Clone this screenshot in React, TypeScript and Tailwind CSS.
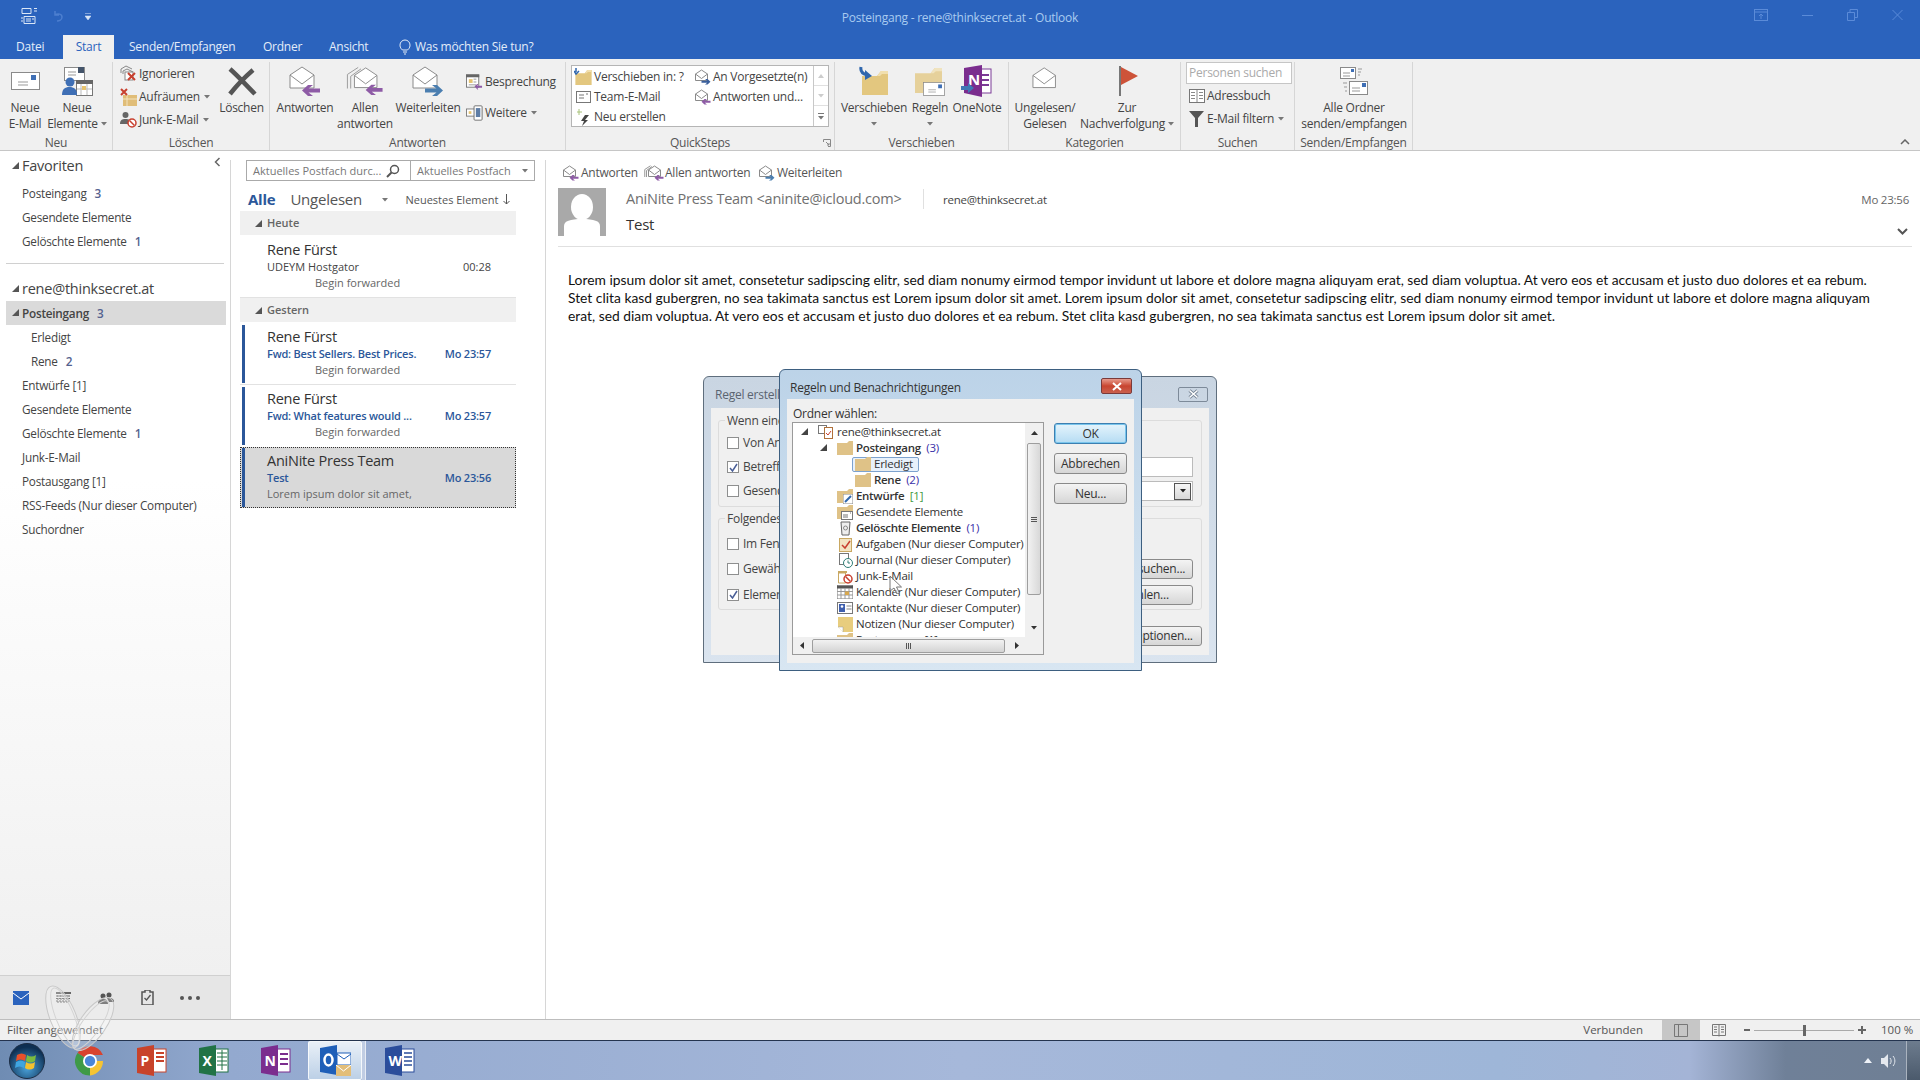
import React from "react";

const Caret = ({ c = "#777" }: { c?: string }) => (
  <svg width="6" height="4" viewBox="0 0 6 4" className="shrink-0"><path d="M0 0h6L3 3.5z" fill={c} /></svg>
);
const Tri = ({ c = "#555" }: { c?: string }) => (
  <svg width="7" height="7" viewBox="0 0 7 7" className="shrink-0"><path d="M7 0v7H0z" fill={c} /></svg>
);

const OpenEnv = ({ size = 32, arrow = "#8e5ba6", dir = "left", multi = false, none = false, sw = 1 }: { size?: number; arrow?: string; dir?: string; multi?: boolean; none?: boolean; sw?: number }) => (
  <svg width={multi ? size * 1.25 : size} height={size} viewBox={multi ? "-8 0 40 32" : "0 0 32 32"} className="shrink-0">
    {multi && <path d="M-6.5 24V9L5 1.5M-3 24V11L8 3" fill="none" stroke="#999" strokeWidth={sw} />}
    <path d="M1 10 13 2l12 8v13H1z" fill="#fff" stroke="#8a8a8a" strokeWidth={sw} />
    <path d="M1 10l12 9 12-9" fill="none" stroke="#8a8a8a" strokeWidth={sw} />
    {!none && (dir === "left"
      ? <polygon points="13,25.5 19,20 24,20 19.5,23.5 31,23.5 31,27.5 19.5,27.5 24,31 19,31" fill={arrow} />
      : <polygon points="31,25.5 25,20 20,20 24.5,23.5 13,23.5 13,27.5 24.5,27.5 20,31 25,31" fill={arrow} />)}
  </svg>
);

const Mail = ({ w = 29, h = 18 }: { w?: number; h?: number }) => (
  <svg width={w} height={h} viewBox="0 0 29 18" className="shrink-0">
    <rect x=".5" y=".5" width="28" height="17" fill="#fff" stroke="#8a8a8a" />
    <rect x="20" y="3" width="5" height="5" fill="#3f6fb5" />
    <path d="M7 10h10M7 13h10" stroke="#999" />
  </svg>
);

const Folder = ({ w = 26, h = 24, c = "#e3c77f" }: { w?: number; h?: number; c?: string }) => (
  <svg width={w} height={h} viewBox="0 0 26 24" className="shrink-0">
    <path d="M0 5h15l4-5h7v24H0z" fill={c} />
    <path d="M15 5l4-5h7v3h-6l-2 2z" fill="#f1dfae" />
  </svg>
);

const Group = ({ w, label, children, launcher }: { w: number; label: string; children?: React.ReactNode; launcher?: boolean }) => (
  <div style={{ width: w }} className="shrink-0 flex flex-col border-r border-[#d6d6d6] mt-[3px] relative">
    <div className="flex flex-1 min-h-0">{children}</div>
    <div className="h-[16px] leading-[18px] text-center text-[#555] whitespace-nowrap shrink-0">{label}</div>
    {launcher && (
      <svg width="8" height="8" viewBox="0 0 8 8" className="absolute right-[3px] bottom-[3px]"><path d="M.5 3V.5H7.5V7.5H5M3 3l3 3M6 4v2H4" fill="none" stroke="#888" /></svg>
    )}
  </div>
);

const Large = ({ w, ml = 0, icon, lines, caret, stack }: { w: number; ml?: number; icon: React.ReactNode; lines: string[]; caret?: boolean; stack?: boolean }) => (
  <div style={{ width: w, marginLeft: ml }} className="shrink-0 flex flex-col items-center">
    <div className="h-[38px] flex items-center justify-center shrink-0">{icon}</div>
    {lines.map((l, i) => (
      <div key={i} className="h-4 leading-4 whitespace-nowrap flex items-center gap-[3px] shrink-0">
        {l}
        {caret && i === lines.length - 1 && <Caret />}
      </div>
    ))}
    {stack && <div className="h-4 flex items-center shrink-0"><Caret /></div>}
  </div>
);

const Small = ({ icon, text, caret, h = 23 }: { icon: React.ReactNode; text: string; caret?: boolean; h?: number }) => (
  <div style={{ height: h }} className="flex items-center gap-[2px] whitespace-nowrap shrink-0">
    <div className="w-[17px] flex justify-center shrink-0">{icon}</div>
    <span>{text}</span>
    {caret && <span className="ml-[2px]"><Caret /></span>}
  </div>
);

const Ignore = () => (
  <svg width="17" height="17" viewBox="0 0 17 17">
    <path d="M1 8V4l5-3 6 3M3 9V6l4-2 6 3" fill="none" stroke="#888" />
    <rect x="5" y="7" width="8" height="8" fill="#fff" stroke="#888" />
    <path d="M8 8l7 7M15 8l-7 7" stroke="#c8402f" strokeWidth="2" />
  </svg>
);
const Clean = () => (
  <svg width="17" height="18" viewBox="0 0 17 18">
    <path d="M3 7h14v11H3z" fill="#e0bd78" />
    <path d="M3 11h14M7 7v11" stroke="#f3e3bf" />
    <path d="M1 1l6 6M7 1L1 7" stroke="#c8402f" strokeWidth="2" />
  </svg>
);
const Junk = () => (
  <svg width="17" height="17" viewBox="0 0 17 17">
    <circle cx="5.5" cy="4" r="3" fill="#666" />
    <path d="M0 13c0-4 2-5 5.500-5S11 9 11 13z" fill="#666" />
    <circle cx="12" cy="12" r="4" fill="#fff" stroke="#c8402f" strokeWidth="1.500" />
    <path d="M9.500 9.500l5 5" stroke="#c8402f" strokeWidth="1.500" />
  </svg>
);
const Cal = ({ arrow }: { arrow?: boolean }) => (
  <svg width="18" height="16" viewBox="0 0 18 16">
    <rect x=".5" y=".5" width="13" height="13" fill="#fff" stroke="#777" />
    <rect x="0" y="0" width="14" height="3" fill="#666" />
    <rect x="3" y="5" width="4" height="4" fill="#e6c36f" />
    <path d="M8 5h3M8 8h3M3 11h8" stroke="#999" />
    {arrow && <polygon points="9,12.500 12,10 13,10 12,12 17,12 17,14 12,14 13,16 12,16" fill="#8e5ba6" />}
  </svg>
);
const More = () => (
  <svg width="19" height="18" viewBox="0 0 19 18">
    <rect x=".5" y="4.500" width="9" height="8" fill="#fff" stroke="#777" />
    <rect x="3" y="7" width="3" height="3" fill="#e6c36f" />
    <rect x="9" y="1" width="9" height="16" rx="1" fill="#fff" stroke="#666" />
    <rect x="11" y="3.500" width="5" height="10" fill="#5f7ea6" />
  </svg>
);
const Elements = () => (
  <svg width="31" height="29" viewBox="0 0 31 29">
    <rect x="2.500" y=".5" width="20" height="13" fill="#fff" stroke="#8a8a8a" />
    <rect x="16" y="0" width="6" height="6" fill="#44546a" />
    <path d="M6 5h8M6 8h8" stroke="#999" />
    <rect x="14.500" y="13.500" width="16" height="15" fill="#fff" stroke="#777" />
    <rect x="14" y="13" width="17" height="4" fill="#666" />
    <path d="M19 17v11M25 17v11M15 22h15" stroke="#bbb" />
    <rect x="20" y="19" width="4" height="4" fill="#e6c36f" />
    <circle cx="8" cy="15" r="4.500" fill="#3f6fb5" />
    <path d="M0 28c0-6 3-8 7.500-8S15 22 15 28z" fill="#3f6fb5" />
  </svg>
);
const BigX = () => (
  <svg width="30" height="29" viewBox="0 0 30 29"><path d="M3 2c8 7 16 16 25 25M26 3C18 10 10 18 3 27" fill="none" stroke="#555" strokeWidth="4.500" /></svg>
);
const MoveIcon = () => (
  <div className="relative w-[30px] h-[30px]">
    <div className="absolute left-[3px] top-[5px]"><Folder w={26} h={24} /></div>
    <svg width="14" height="15" viewBox="0 0 14 15" className="absolute left-0 top-0"><path d="M2 1c-1 5 2 7 6 8" fill="none" stroke="#2f66ad" strokeWidth="3" /><polygon points="6,4 13,10 6,14" fill="#2f66ad" /></svg>
  </div>
);
const RulesIcon = () => (
  <div className="relative w-[30px] h-[30px]">
    <div className="absolute left-0 top-[2px] opacity-75"><Folder w={27} h={25} /></div>
    <div className="absolute left-[8px] top-[16px]"><Mail w={22} h={14} /></div>
  </div>
);
const OneNote = ({ size = 32, arrow = true }: { size?: number; arrow?: boolean }) => (
  <svg width={size} height={size} viewBox="0 0 32 32">
    <rect x="14" y="4" width="16" height="24" fill="#fff" stroke="#7b3a96" />
    <path d="M21 10h7M21 15h7M21 20h7" stroke="#7b3a96" strokeWidth="2" />
    <polygon points="3,3 21,0 21,32 3,28" fill="#7b2d8e" />
    <text x="7" y="20" fontSize="15" fontWeight="700" fill="#fff" fontFamily="Open Sans, sans-serif">N</text>
    {arrow && <polygon points="0,21 7,21 7,18 13,23 7,28 7,25 0,25" fill="#3f78b5" />}
  </svg>
);
const Flag = () => (
  <svg width="20" height="30" viewBox="0 0 20 30"><path d="M1 0v30" stroke="#777" strokeWidth="2" /><polygon points="2,1 19,10 2,19" fill="#cd5339" /></svg>
);
const Book = () => (
  <svg width="16" height="14" viewBox="0 0 16 14"><rect x=".5" y=".5" width="15" height="13" fill="#fff" stroke="#777" /><path d="M8 1v12M2 3.500h4M2 6.500h4M2 9.500h4M10 3.500h4M10 6.500h4M10 9.500h4" stroke="#888" /></svg>
);
const Funnel = () => (
  <svg width="15" height="16" viewBox="0 0 15 16"><polygon points="0,0 15,0 9,7 9,16 6,16 6,7" fill="#555" /></svg>
);
const AllFolders = () => (
  <div className="flex flex-col items-start w-[28px] h-[29px] relative">
    <svg width="28" height="29" viewBox="0 0 28 29">
      <rect x=".5" y=".5" width="15" height="11" fill="#fff" stroke="#8a8a8a" />
      <rect x="11" y="2" width="3" height="3" fill="#3f6fb5" />
      <path d="M3 6h7M3 9h7M18 2h4M18 5h3M18 8h2" stroke="#999" />
      <rect x="9.500" y="14.500" width="18" height="13" fill="#fff" stroke="#8a8a8a" />
      <rect x="22" y="16" width="4" height="4" fill="#3f6fb5" />
      <path d="M12 21h8M12 24h8M3 16h4M4 20h3M5 24h2" stroke="#999" />
    </svg>
  </div>
);

const Ribbon = () => (
  <div className="h-[92px] flex bg-[#f0f0f0] border-b border-[#c6c6c6] text-[#444] text-[12px] shrink-0">
    <Group w={113} label="Neu">
      <Large w={50} icon={<Mail />} lines={["Neue", "E-Mail"]} />
      <Large w={54} icon={<Elements />} lines={["Neue", "Elemente"]} caret />
    </Group>
    <Group w={157} label="Löschen">
      <div className="w-[100px] pl-[7px] flex flex-col shrink-0">
        <Small icon={<Ignore />} text="Ignorieren" />
        <Small icon={<Clean />} text="Aufräumen" caret />
        <Small icon={<Junk />} text="Junk-E-Mail" caret />
      </div>
      <Large w={57} icon={<BigX />} lines={["Löschen"]} />
    </Group>
    <Group w={296} label="Antworten">
      <Large w={70} icon={<OpenEnv />} lines={["Antworten"]} />
      <Large w={50} icon={<OpenEnv multi size={30} />} lines={["Allen", "antworten"]} />
      <Large w={76} icon={<OpenEnv arrow="#4a7eb0" dir="right" />} lines={["Weiterleiten"]} />
      <div className="flex flex-col pt-[8px] gap-[7px]">
        <Small h={24} icon={<Cal arrow />} text="Besprechung" />
        <Small h={24} icon={<More />} text="Weitere" caret />
      </div>
    </Group>
    <Group w={269} label="QuickSteps" launcher>
      <div className="ml-[5px] mt-[3px] w-[258px] h-[62px] border border-[#b5b5b5] bg-white flex shrink-0">
        <div className="w-[122px] pl-[3px] pt-[1px] flex flex-col">
          <Small h={20} icon={<div className="relative"><Folder w={17} h={15} /><svg width="8" height="8" viewBox="0 0 8 8" className="absolute -left-[1px] -top-[2px]"><path d="M2 0v4M0 3l2 3 3-3" fill="none" stroke="#2f66ad" strokeWidth="1.500" /></svg></div>} text="Verschieben in: ?" />
          <Small h={20} icon={<svg width="15" height="12" viewBox="0 0 15 12"><rect x=".5" y=".5" width="14" height="11" fill="#fff" stroke="#777" /><path d="M3 4h5M3 7h5M10 3h2" stroke="#777" /></svg>} text="Team-E-Mail" />
          <Small h={20} icon={<svg width="14" height="17" viewBox="0 0 14 17"><path d="M8 6h4L8 11h3l-6 6 2-5H4z" fill="#444" /><path d="M2 0v6M0 3h5" stroke="#a8c27a" /></svg>} text="Neu erstellen" />
        </div>
        <div className="w-[119px] pt-[1px] flex flex-col">
          <Small h={20} icon={<OpenEnv size={16} arrow="#3a5f9c" dir="right" sw={2} />} text="An Vorgesetzte(n)" />
          <Small h={20} icon={<OpenEnv size={16} sw={2} />} text="Antworten und..." />
        </div>
        <div className="w-[15px] border-l border-[#c8c8c8] flex flex-col items-center text-[#bbb]">
          <div className="h-[20px] flex items-center border-b border-[#e0e0e0] w-full justify-center"><svg width="6" height="4" viewBox="0 0 6 4"><path d="M0 4h6L3 0z" fill="#ccc" /></svg></div>
          <div className="h-[20px] flex items-center border-b border-[#e0e0e0] w-full justify-center"><Caret c="#ccc" /></div>
          <div className="flex-1 flex flex-col gap-[2px] items-center justify-center"><div className="w-[6px] h-px bg-[#777]" /><Caret /></div>
        </div>
      </div>
    </Group>
    <Group w={174} label="Verschieben">
      <Large w={78} icon={<MoveIcon />} lines={["Verschieben"]} stack />
      <Large w={34} icon={<RulesIcon />} lines={["Regeln"]} stack />
      <Large w={60} icon={<OneNote />} lines={["OneNote"]} />
    </Group>
    <Group w={172} label="Kategorien">
      <Large w={72} icon={<span className="ml-[4px]"><OpenEnv none size={30} /></span>} lines={["Ungelesen/", "Gelesen"]} />
      <Large w={92} icon={<span className="ml-[4px]"><Flag /></span>} lines={["Zur", "Nachverfolgung"]} caret />
    </Group>
    <Group w={114} label="Suchen">
      <div className="pl-[5px] flex flex-col w-full">
        <div className="w-[106px] h-[22px] border border-[#c6c6c6] bg-white text-[#aaa] pl-[2px] leading-[19px] whitespace-nowrap shrink-0">Personen suchen</div>
        <div className="pl-[2px]">
          <Small h={23} icon={<Book />} text="Adressbuch" />
          <Small h={23} icon={<Funnel />} text="E-Mail filtern" caret />
        </div>
      </div>
    </Group>
    <Group w={118} label="Senden/Empfangen">
      <Large w={118} icon={<AllFolders />} lines={["Alle Ordner", "senden/empfangen"]} />
    </Group>
    <div className="flex-1 flex items-end justify-end pr-[10px] pb-[5px]">
      <svg width="10" height="6" viewBox="0 0 10 6"><path d="M1 5l4-4 4 4" fill="none" stroke="#666" strokeWidth="1.500" /></svg>
    </div>
  </div>
);

const TitleBar = () => (
  <div className="h-[59px] bg-[#2b63bd] text-[12px] shrink-0 flex flex-col">
    <div className="h-[35px] flex relative">
      <div className="pl-[21px] pt-[8px] flex items-start">
        <svg width="17" height="16" viewBox="0 0 17 16"><path d="M1 .5h9v5H1zM3 8.500h11v7H3zM13 .5h3M13 3h3M5 11h5M5 13h5M11 11h2M0 10h2M0 13h2" fill="none" stroke="#dbe7f7" /></svg>
        <svg width="12" height="12" viewBox="0 0 12 12" className="ml-[14px] mt-[2px]"><path d="M3 1v4h4M3 5c3-2 7-1 7 2s-3 4-5 4" fill="none" stroke="#4d7fcf" strokeWidth="1.500" /></svg>
        <svg width="6" height="7" viewBox="0 0 6 7" className="ml-[21px] mt-[5px]"><path d="M0 .5h6M0 3h6L3 7z" fill="#dbe7f7" stroke="#dbe7f7" strokeWidth=".5" /></svg>
      </div>
      <div className="absolute left-0 right-0 top-[10px] text-center text-[#a9cbf0] leading-4">Posteingang - rene@thinksecret.at - Outlook</div>
      <div className="ml-auto flex items-start pt-[9px] pr-[17px] gap-[34px]">
        <svg width="14" height="12" viewBox="0 0 14 12"><rect x=".5" y=".5" width="13" height="11" fill="none" stroke="#5b8bd8" /><path d="M.5 3h13M7 10V5M5 7l2-2 2 2" fill="none" stroke="#5b8bd8" /></svg>
        <svg width="11" height="12" viewBox="0 0 11 12"><path d="M0 6.500h11" stroke="#5b8bd8" /></svg>
        <svg width="11" height="12" viewBox="0 0 11 12"><path d="M.5 3.500h7v8h-7zM3 3.500V.5h7.500v8H7.500" fill="none" stroke="#5b8bd8" /></svg>
        <svg width="11" height="12" viewBox="0 0 11 12"><path d="M.5 1l10 10M10.500 1l-10 10" stroke="#5b8bd8" /></svg>
      </div>
    </div>
    <div className="h-[24px] flex text-[#e4edf9] leading-[24px]">
      <div className="w-[63px] pl-[16px]">Datei</div>
      <div className="w-[51px] bg-[#f0f0f0] text-[#2b63bd] text-center">Start</div>
      <div className="ml-[15px] w-[134px]">Senden/Empfangen</div>
      <div className="w-[66px]">Ordner</div>
      <div className="w-[69px]">Ansicht</div>
      <div className="flex items-center gap-[3px]">
        <svg width="14" height="16" viewBox="0 0 14 16"><path d="M4.500 11C2 9 2 7 2 6a5 5 0 0 1 10 0c0 1 0 3-2.500 5zM5 13h4M6 15h2" fill="none" stroke="#e4edf9" /></svg>
        Was möchten Sie tun?
      </div>
    </div>
  </div>
);

const FolderRow = ({ children, pl = 22, active, mt = 0, tri, cls = "" }: { children: React.ReactNode; pl?: number; active?: boolean; mt?: number; tri?: boolean; cls?: string }) => (
  <div style={{ paddingLeft: pl, marginTop: mt }} className={"h-6 leading-6 flex items-center gap-[8px] relative whitespace-nowrap " + (active ? "bg-[#dadada] " : "") + cls}>
    {tri && <span className="absolute left-[6px] top-[8px]"><Tri /></span>}
    {children}
  </div>
);
const Count = ({ n }: { n: string }) => <span className="font-semibold text-[#54628f]">{n}</span>;

const Sidebar = () => (
  <div className="w-[230px] shrink-0 flex flex-col text-[11.75px] text-[#444]">
    <div className="flex-1 bg-gradient-to-b from-white from-40% to-[#f0f0f0] pt-[3px] relative">
      <div className="absolute right-[9px] top-[6px]"><svg width="7" height="10" viewBox="0 0 7 10"><path d="M5.500 1L1.500 5l4 4" fill="none" stroke="#666" strokeWidth="1.500" /></svg></div>
      <div className="pl-[6px]"><FolderRow pl={16} tri cls="text-[14.5px]"><span>Favoriten</span></FolderRow></div>
      <div className="mt-[3px]">
        <FolderRow>Posteingang <Count n="3" /></FolderRow>
        <FolderRow>Gesendete Elemente</FolderRow>
        <FolderRow>Gelöschte Elemente <Count n="1" /></FolderRow>
      </div>
      <div className="h-px bg-[#d0d0d0] mx-[6px] mt-[10px]" />
      <div className="pl-[6px] pr-[4px] mt-[13px]">
        <FolderRow pl={16} tri cls="text-[14.5px]">rene@thinksecret.at</FolderRow>
        <FolderRow pl={16} tri active><span className="font-semibold">Posteingang</span> <Count n="3" /></FolderRow>
      </div>
      <FolderRow pl={31}>Erledigt</FolderRow>
      <FolderRow pl={31}>Rene <Count n="2" /></FolderRow>
      <FolderRow>Entwürfe [1]</FolderRow>
      <FolderRow>Gesendete Elemente</FolderRow>
      <FolderRow>Gelöschte Elemente <Count n="1" /></FolderRow>
      <FolderRow>Junk-E-Mail</FolderRow>
      <FolderRow>Postausgang [1]</FolderRow>
      <FolderRow>RSS-Feeds (Nur dieser Computer)</FolderRow>
      <FolderRow>Suchordner</FolderRow>
    </div>
    <div className="h-[44px] bg-[#e6e6e6] border-t border-[#d0d0d0] flex items-center pl-[13px] gap-[27px] shrink-0">
      <svg width="16" height="14" viewBox="0 0 16 14"><rect width="16" height="14" fill="#2b63bd" /><path d="M0 2l8 6 8-6" fill="none" stroke="#fff" /></svg>
      <svg width="15" height="12" viewBox="0 0 15 12"><rect width="15" height="2" fill="#666" /><path d="M0 4h15M0 6.500h15M0 9h15M2 3v9M5 3v9M8 3v9M11 3v9" stroke="#666" strokeDasharray="2 1" /></svg>
      <svg width="16" height="12" viewBox="0 0 16 12"><circle cx="5" cy="4" r="2.500" fill="#555" /><circle cx="11" cy="3" r="2.500" fill="#555" /><path d="M0 12c0-4 2-5 5-5s5 1 5 5zM9 6h3c2 0 4 1 4 4h-5z" fill="#555" /></svg>
      <svg width="13" height="15" viewBox="0 0 13 15"><path d="M1 2h3V0h5v2h3v13H1z" fill="none" stroke="#555" strokeWidth="1.500" /><path d="M3.500 8l2 2 4-5" fill="none" stroke="#555" strokeWidth="1.300" /></svg>
      <div className="flex gap-[4px] ml-[-1px]"><div className="w-[4px] h-[4px] rounded-full bg-[#555]" /><div className="w-[4px] h-[4px] rounded-full bg-[#555]" /><div className="w-[4px] h-[4px] rounded-full bg-[#555]" /></div>
    </div>
  </div>
);

const Item = ({ name, subject, time, preview, unread, selected, indent = 48, h = 62, top = 6 }: { name: string; subject: string; time: string; preview: string; unread?: boolean; selected?: boolean; indent?: number; h?: number; top?: number }) => (
  <div style={{ height: h }} className={"flex " + (selected ? "bg-[#d9d9d9] outline-1 outline-dotted outline-[#333] -outline-offset-1" : "")}>
    <div className={"w-[3px] ml-[2px] shrink-0 " + (unread ? "bg-[#2b579a] " : "") + (selected ? "my-[1px]" : "my-[2px]")} />
    <div style={{ paddingTop: top }} className="ml-[22px] pr-[25px] flex-1 min-w-0">
      <div className="text-[14.5px] leading-4 text-[#333] whitespace-nowrap">{name}</div>
      <div className={"flex justify-between mt-px leading-4 whitespace-nowrap text-[11px] " + (unread ? "text-[#2b579a] font-semibold tracking-[-0.2px]" : "text-[#444] font-medium tracking-normal")}>
        <span>{subject}</span><span>{time}</span>
      </div>
      <div style={{ paddingLeft: indent }} className="leading-[15px] text-[11px] tracking-normal text-[#666] whitespace-nowrap">{preview}</div>
    </div>
  </div>
);

const GroupHead = ({ label }: { label: string }) => (
  <div className="h-6 bg-[#f0f0f0] flex items-center pl-[15px] gap-[5px] text-[11px] tracking-normal font-semibold text-[#666]"><Tri />{label}</div>
);

const List = () => (
  <div className="w-[314px] shrink-0 text-[12px]">
    <div className="ml-[15px] mt-[9px] w-[289px] h-[21px] border border-[#aaa] flex text-[#777] text-[11px] tracking-normal leading-[19px] bg-white">
      <div className="w-[164px] pl-[6px] flex items-center gap-[5px] border-r border-[#aaa] whitespace-nowrap">Aktuelles Postfach durc...
        <svg width="14" height="14" viewBox="0 0 14 14"><circle cx="8.500" cy="5.500" r="4" fill="none" stroke="#555" strokeWidth="1.500" /><path d="M5.500 8.500L1 13" stroke="#555" strokeWidth="2" /></svg>
      </div>
      <div className="flex-1 pl-[6px] flex items-center justify-between pr-[6px] whitespace-nowrap">Aktuelles Postfach<Caret /></div>
    </div>
    <div className="h-[23px] mt-[7px] ml-[17px] flex items-center whitespace-nowrap text-[#555]">
      <span className="text-[15px] font-bold text-[#2b579a]">Alle</span>
      <span className="text-[15px] ml-[15px] w-[92px]">Ungelesen</span>
      <Caret />
      <span className="ml-[17px] mt-[2px] text-[11px] tracking-normal">Neuestes Element</span>
      <svg width="7" height="11" viewBox="0 0 7 11" className="ml-[5px]"><path d="M3.500 0v10M.5 7l3 3 3-3" fill="none" stroke="#555" /></svg>
    </div>
    <div className="ml-[9px] w-[276px]">
      <GroupHead label="Heute" />
      <Item name="Rene Fürst" subject="UDEYM Hostgator" time="00:28" preview="Begin forwarded" top={7} h={62} />
      <div className="h-px bg-[#e2e2e2]" />
      <GroupHead label="Gestern" />
      <div className="h-px" />
      <Item unread name="Rene Fürst" subject="Fwd: Best Sellers. Best Prices." time="Mo 23:57" preview="Begin forwarded" />
      <div className="h-px bg-[#e2e2e2] -mt-px" />
      <Item unread name="Rene Fürst" subject="Fwd: What features would ..." time="Mo 23:57" preview="Begin forwarded" />
      <Item unread selected name="AniNite Press Team" subject="Test" time="Mo 23:56" preview="Lorem ipsum dolor sit amet," indent={0} h={61} />
    </div>
  </div>
);

const Reading = () => (
  <div className="flex-1 min-w-0 pl-[12px] pr-[8px] text-[12px] text-[#555]">
    <div className="mt-[12px] h-5 ml-[5px] flex items-center whitespace-nowrap">
      <OpenEnv size={16} sw={2} /><span className="ml-[2px] w-[55px]">Antworten</span>
      <span className="ml-[8px]"><OpenEnv size={16} sw={2} multi /></span><span className="ml-[1px] w-[83px]">Allen antworten</span>
      <span className="ml-[11px]"><OpenEnv size={16} sw={2} arrow="#4a7eb0" dir="right" /></span><span className="ml-[2px]">Weiterleiten</span>
    </div>
    <div className="mt-[5px] flex h-12">
      <svg width="48" height="48" viewBox="0 0 48 48" className="shrink-0">
        <rect width="48" height="48" fill="#a9a9a9" />
        <ellipse cx="24" cy="19" rx="11" ry="13" fill="#fff" />
        <path d="M6 48V38c0-5 6-7 18-7s18 2 18 7v10z" fill="#fff" />
      </svg>
      <div className="ml-[20px] flex-1 flex flex-col">
        <div className="h-[22px] flex items-center whitespace-nowrap">
          <span className="text-[14.5px] text-[#707070] w-[297px]">AniNite Press Team &lt;aninite@icloud.com&gt;</span>
          <span className="w-px h-5 bg-[#e0e0e0]" />
          <span className="ml-[19px] mt-[1px] text-[11.5px] text-[#444]">rene@thinksecret.at</span>
          <span className="ml-auto pr-[3px] mt-[1px] text-[11.5px] text-[#666]">Mo 23:56</span>
        </div>
        <div className="mt-[4px] h-[20px] flex items-center justify-between">
          <span className="text-[15px] text-[#333]">Test</span>
          <svg width="11" height="7" viewBox="0 0 11 7" className="mr-[4px] mt-[14px]"><path d="M1 1l4.500 4.500L10 1" fill="none" stroke="#555" strokeWidth="2" /></svg>
        </div>
      </div>
    </div>
    <div className="h-px bg-[#e0e0e0] mt-[10px]" />
    <div className="ml-[10px] mt-[24px] text-[13.83px] tracking-normal leading-[18px] text-[#111] font-['Lato',sans-serif] whitespace-nowrap">
      <div>Lorem ipsum dolor sit amet, consetetur sadipscing elitr, sed diam nonumy eirmod tempor invidunt ut labore et dolore magna aliquyam erat, sed diam voluptua. At vero eos et accusam et justo duo dolores et ea rebum.</div>
      <div>Stet clita kasd gubergren, no sea takimata sanctus est Lorem ipsum dolor sit amet. Lorem ipsum dolor sit amet, consetetur sadipscing elitr, sed diam nonumy eirmod tempor invidunt ut labore et dolore magna aliquyam</div>
      <div>erat, sed diam voluptua. At vero eos et accusam et justo duo dolores et ea rebum. Stet clita kasd gubergren, no sea takimata sanctus est Lorem ipsum dolor sit amet.</div>
    </div>
  </div>
);

const Status = () => (
  <div className="h-[21px] bg-[#f0f0f0] border-t border-[#bdbdbd] flex items-stretch text-[11.5px] tracking-normal text-[#555] shrink-0">
    <div className="pl-[7px] leading-5">Filter angewendet</div>
    <div className="ml-auto leading-5">Verbunden</div>
    <div className="ml-[19px] w-[38px] bg-[#c6c6c6] flex items-center justify-center">
      <svg width="14" height="13" viewBox="0 0 14 13"><path d="M.5.5h13v12H.5zM4.500.5v12" fill="none" stroke="#777" /></svg>
    </div>
    <div className="ml-[12px] flex items-center">
      <svg width="14" height="13" viewBox="0 0 14 13"><path d="M.5.5h13v11H.5zM7 .5v12M2 3h3M2 5.500h3M2 8h3M9 3h3M9 5.500h3M9 8h3" fill="none" stroke="#777" /></svg>
    </div>
    <div className="ml-[18px] flex items-center">
      <div className="w-[6px] h-[2px] bg-[#666]" />
      <div className="ml-[4px] w-[100px] h-px bg-[#aaa] relative"><div className="absolute left-[49px] -top-[5px] w-[3px] h-[11px] bg-[#666]" /></div>
      <svg width="8" height="8" viewBox="0 0 8 8" className="ml-[4px]"><path d="M0 4h8M4 0v8" stroke="#666" strokeWidth="2" /></svg>
    </div>
    <div className="ml-[15px] w-[39px] leading-5 whitespace-nowrap">100 %</div>
  </div>
);

const Office = ({ c, letter, extra }: { c: string; letter: string; extra?: React.ReactNode }) => (
  <svg width="31" height="31" viewBox="0 0 31 31">
    <rect x="14" y="4" width="16" height="23" fill="#fff" stroke={c} />
    {extra}
    <polygon points="1,3 18,0 18,31 1,28" fill={c} />
    <text x="4.500" y="21" fontSize="14" fontWeight="700" fill="#fff" fontFamily="Open Sans, sans-serif">{letter}</text>
  </svg>
);

const Taskbar = () => (
  <div className="h-10 shrink-0 flex items-center relative bg-[linear-gradient(90deg,#6f8cb3_0%,#93a9cf_12%,#a6b8da_50%,#9eb6d8_78%,#a4b4d6_88%,#6f8098_93%,#6f7f94_100%)] border-t border-[#24344f]">
    <svg width="36" height="36" viewBox="0 0 36 36" className="ml-[9px] shrink-0">
      <defs><radialGradient id="orb" cx="50%" cy="70%" r="60%"><stop offset="0%" stopColor="#4aa3dc" /><stop offset="100%" stopColor="#0e2f52" /></radialGradient></defs>
      <circle cx="18" cy="18" r="17.500" fill="url(#orb)" stroke="#1c2d44" />
      <path d="M8 12c3-2 6-2 9 0l-1 6c-3-2-6-2-9 0z" fill="#e8502a" />
      <path d="M18 12c3 2 6 2 9 0l-1 6c-3 2-6 2-9 0z" fill="#7cbb3f" />
      <path d="M7 19c3-2 6-2 9 0l-1 6c-3-2-6-2-9 0z" fill="#3fa5e0" />
      <path d="M17 19c3 2 6 2 9 0l-1 6c-3 2-6 2-9 0z" fill="#f5c12e" />
    </svg>
    <svg width="30" height="30" viewBox="0 0 30 30" className="ml-[30px] shrink-0">
      <path d="M15 15L2.500 7A14.500 14.500 0 0 1 28 9H15z" fill="#d8432f" />
      <path d="M15 15H28A14.500 14.500 0 0 1 15 29.500z" fill="#f6c433" />
      <path d="M15 15L15 29.500A14.500 14.500 0 0 1 2.500 7z" fill="#3e9a47" />
      <circle cx="15" cy="15" r="7" fill="#fff" /><circle cx="15" cy="15" r="5.200" fill="#4a86d8" />
    </svg>
    <div className="ml-[31px]"><Office c="#c8432a" letter="P" extra={<path d="M20 8h8M20 12h8M20 16h8" stroke="#c8432a" strokeWidth="2" />} /></div>
    <div className="ml-[31px]"><Office c="#217346" letter="X" extra={<path d="M19 8h10M19 12h10M19 16h10M19 20h10M24 5v20" stroke="#217346" />} /></div>
    <div className="ml-[31px]"><Office c="#7b2d8e" letter="N" extra={<path d="M20 9h8M20 14h8M20 19h8" stroke="#7b2d8e" strokeWidth="2" />} /></div>
    <div className="ml-[17px] h-full w-[54px] bg-gradient-to-b from-[#e9f0f8] to-[#bcd0e6] border border-white/80 rounded-[2px] flex items-center justify-center">
      <svg width="31" height="32" viewBox="0 0 31 32">
        <polygon points="0,3 17,0 17,30 0,27" fill="#1f5fb8" />
        <ellipse cx="8.500" cy="15" rx="4" ry="5.500" fill="none" stroke="#fff" strokeWidth="2.500" />
        <rect x="17" y="8" width="14" height="12" fill="#fff" stroke="#1f5fb8" />
        <path d="M17 9l7 5 7-5" fill="none" stroke="#1f5fb8" />
        <rect x="16" y="20" width="15" height="11" fill="#e3be78" /><path d="M16 20l7.500 6 7.500-6" fill="none" stroke="#fff" />
      </svg>
    </div>
    <div className="w-[4px] h-full bg-white/40 border-r border-white/60 mr-[18px]" />
    <Office c="#2b4d9b" letter="W" extra={<path d="M20 8h8M20 12h8M20 16h8M20 20h8" stroke="#2b4d9b" strokeWidth="1.500" />} />
    <div className="ml-auto flex items-center h-full">
      <svg width="8" height="5" viewBox="0 0 8 5"><path d="M0 5h8L4 0z" fill="#eef2f8" /></svg>
      <svg width="17" height="16" viewBox="0 0 17 16" className="ml-[8px]"><path d="M1 5h3l4-4v14l-4-4H1z" fill="#e4e8ee" /><path d="M10 5c1.500 2 1.500 4 0 6M13 3c2.500 3 2.500 7 0 10" fill="none" stroke="#e4e8ee" /></svg>
      <div className="ml-[9px] w-[14px] h-full bg-[linear-gradient(180deg,#6d7c8e,#4b5a6c)] border-l border-[#aab3bf]" />
    </div>
  </div>
);

const Box = ({ checked }: { checked?: boolean }) => (
  <div className="w-[12px] h-[12px] border border-[#8e8f8f] bg-white flex items-center justify-center shrink-0">
    {checked && <svg width="9" height="9" viewBox="0 0 9 9"><path d="M1 5l2.500 3L8 1" fill="none" stroke="#4a5f97" strokeWidth="1.500" /></svg>}
  </div>
);
const Btn = ({ w = 73, h = 21, children, primary }: { w?: number; h?: number; children: React.ReactNode; primary?: boolean }) => (
  <div style={{ width: w, height: h }} className={"border rounded-[3px] flex items-center justify-center whitespace-nowrap text-[#333] " + (primary ? "border-[#3c7fb1] bg-gradient-to-b from-[#e5f4fc] to-[#b5dcf3] shadow-[inset_0_0_0_1px_#79c5ec]" : "border-[#8a8a8a] bg-gradient-to-b from-[#f4f4f4] to-[#d6d6d6]")}>{children}</div>
);

const BackDialog = () => (
  <div className="absolute left-[703px] top-[376px] w-[514px] h-[287px] rounded-t-[6px] border border-[#5f6e7d] bg-gradient-to-b from-[#c9d5e2] to-[#dae4ef] text-[12px] text-[#444] flex flex-col px-[7px] pb-[7px]">
    <div className="h-[31px] flex items-center shrink-0 pl-[4px] pt-[4px] text-[#5a6470]">
      <span>Regel erstellen</span>
      <div className="ml-auto mr-[1px] w-[30px] h-[15px] border border-[#7d8a99] rounded-[2px] flex items-center justify-center -mt-[1px]">
        <svg width="11" height="10" viewBox="0 0 11 10"><path d="M1.500 1.500l8 7M9.500 1.500l-8 7" stroke="#748394" strokeWidth="3" /><path d="M1.500 1.500l8 7M9.500 1.500l-8 7" stroke="#fff" strokeWidth="1.500" /></svg>
      </div>
    </div>
    <div className="flex-1 bg-[#f0f0f0] px-[7px] pt-[12px] min-h-0 flex flex-col">
      <div className="relative border border-[#dcdcdc] rounded-[3px] h-[87px] w-[484px] pl-[8px] pt-[10px] flex flex-col shrink-0">
        <span className="absolute left-[6px] -top-[8px] bg-[#f0f0f0] px-[2px] leading-4">Wenn eine Nachricht</span>
        <div className="h-[24px] flex items-center gap-[4px] shrink-0"><Box /><span>Von AniNite Press</span></div>
        <div className="h-[24px] flex items-center gap-[4px] shrink-0"><Box checked /><span>Betreff enthält</span>
          <div className="ml-auto mr-[8px] w-[100px] h-[20px] border border-[#bbb] bg-white" />
        </div>
        <div className="h-[24px] flex items-center gap-[4px] shrink-0"><Box /><span>Gesendet an</span>
          <div className="ml-auto mr-[8px] w-[100px] h-[20px] border border-[#bbb] bg-white flex justify-end pr-[1px] items-center">
            <div className="w-[17px] h-[17px] border border-[#555] bg-gradient-to-b from-[#f6f6f6] to-[#d8d8d8] flex items-center justify-center"><Caret c="#222" /></div>
          </div>
        </div>
      </div>
      <div className="relative mt-[11px] border border-[#dcdcdc] rounded-[3px] h-[92px] w-[484px] pl-[8px] pt-[12px] flex flex-col shrink-0">
        <span className="absolute left-[6px] -top-[8px] bg-[#f0f0f0] px-[2px] leading-4">Folgendes ausführen</span>
        <div className="h-[25px] flex items-center gap-[4px] shrink-0"><Box /><span>Im Fenster anzeigen</span></div>
        <div className="h-[26px] flex items-center gap-[4px] shrink-0"><Box /><span>Gewählten Sound</span>
          <div className="ml-auto mr-[8px]"><Btn w={96} h={20}>Durchsuchen...</Btn></div>
        </div>
        <div className="h-[25px] flex items-center gap-[4px] shrink-0"><Box checked /><span>Element verschieben</span>
          <div className="ml-auto mr-[8px]"><Btn w={116} h={20}>Auswählen...</Btn></div>
        </div>
      </div>
      <div className="mt-[16px] flex justify-end w-[484px]"><Btn w={136} h={20}>Erweiterte Optionen...</Btn></div>
    </div>
  </div>
);

const TreeRow = ({ pl, icon, tri, children }: { pl: number; icon: React.ReactNode; tri?: boolean; children: React.ReactNode }) => (
  <div style={{ paddingLeft: pl }} className="h-4 flex items-center whitespace-nowrap relative">
    {tri && <span className="absolute" style={{ left: pl - 17, top: 4 }}><Tri c="#444" /></span>}
    <span className="w-[16px] h-[16px] flex items-center justify-center shrink-0">{icon}</span>
    <span className="ml-[3px] leading-4">{children}</span>
  </div>
);
const B = ({ t, c, n }: { t: string; c: string; n: string }) => (
  <><span className="font-semibold tracking-[-0.3px]">{t}</span> <span style={{ color: c }}>&nbsp;{n}</span></>
);
const F = ({ o }: { o?: React.ReactNode }) => (
  <span className="relative w-[16px] h-[14px] block">
    <svg width="16" height="14" viewBox="0 0 16 14" className="absolute"><path d="M0 2h10l2-2h4v14H0z" fill="#dfc287" /></svg>
    {o && <span className="absolute right-0 bottom-[-1px]">{o}</span>}
  </span>
);

const FrontDialog = () => (
  <div className="absolute left-[779px] top-[369px] w-[363px] h-[302px] rounded-t-[6px] border border-[#3d5f80] bg-gradient-to-b from-[#bcd3e8] to-[#d8e6f2] text-[11.5px] text-[#333] flex flex-col px-[7px] pb-[7px]">
    <div className="h-[29px] flex items-center shrink-0 pl-[3px] pt-[6px] text-[12px]">
      <span>Regeln und Benachrichtigungen</span>
      <div className="ml-auto mr-[2px] -mt-[3px] w-[31px] h-[16px] border border-[#7a3a3a] rounded-[2px] bg-gradient-to-b from-[#e69a8c] via-[#c8442f] to-[#c9604e] flex items-center justify-center">
        <svg width="10" height="9" viewBox="0 0 10 9"><path d="M1 1l8 7M9 1L1 8" stroke="#fff" strokeWidth="2" /></svg>
      </div>
    </div>
    <div className="flex-1 bg-[#f0f0f0] pl-[5px] min-h-0 flex flex-col">
      <div className="h-[23px] pl-[1px] leading-[30px] text-[12px] shrink-0">Ordner wählen:</div>
      <div className="flex">
        <div className="w-[252px] h-[233px] border border-[#9a9a9a] bg-white flex flex-col shrink-0">
          <div className="flex flex-1 min-h-0">
            <div className="flex-1 min-w-0 overflow-hidden pt-px pl-px">
              <TreeRow pl={24} tri icon={<svg width="16" height="14" viewBox="0 0 16 14"><rect x=".5" y=".5" width="8" height="8" fill="#fff" stroke="#777" /><rect x="6.500" y="2.500" width="8" height="11" fill="#fff" stroke="#b0703a" /><path d="M8 8l2 2 3-4" fill="none" stroke="#c8402f" /></svg>}>rene@thinksecret.at</TreeRow>
              <TreeRow pl={43} tri icon={<F />}><B t="Posteingang" c="#3a2fa8" n="(3)" /></TreeRow>
              <div className="relative">
                <div className="absolute left-[58px] top-[1px] w-[67px] h-[15px] border border-[#7da2ce] rounded-[2px] bg-[#e8f1fb]" />
                <TreeRow pl={61} icon={<F />}>Erledigt</TreeRow>
              </div>
              <TreeRow pl={61} icon={<F />}><B t="Rene" c="#3a2fa8" n="(2)" /></TreeRow>
              <TreeRow pl={43} icon={<F o={<svg width="10" height="10" viewBox="0 0 10 10"><rect width="10" height="10" fill="#fff" stroke="#888" /><path d="M2 8l6-6" stroke="#2f66ad" strokeWidth="2" /></svg>} />}><B t="Entwürfe" c="#3f9a3f" n="[1]" /></TreeRow>
              <TreeRow pl={43} icon={<F o={<svg width="12" height="9" viewBox="0 0 12 9"><rect x=".5" y=".5" width="11" height="8" fill="#fff" stroke="#777" /><path d="M2 4h5M2 6h5M9 2h1" stroke="#777" /></svg>} />}>Gesendete Elemente</TreeRow>
              <TreeRow pl={43} icon={<svg width="11" height="15" viewBox="0 0 11 15"><path d="M1 1h9l-1 13H2z" fill="#eee" stroke="#666" /><circle cx="5.500" cy="7" r="2" fill="none" stroke="#888" /></svg>}><B t="Gelöschte Elemente" c="#3a2fa8" n="(1)" /></TreeRow>
              <TreeRow pl={43} icon={<svg width="13" height="15" viewBox="0 0 13 15"><rect x=".5" y="1.500" width="12" height="13" fill="#f3e4c2" stroke="#c9a862" /><path d="M3 8l3 3 5-7" fill="none" stroke="#c8402f" strokeWidth="1.500" /></svg>}>Aufgaben (Nur dieser Computer)</TreeRow>
              <TreeRow pl={43} icon={<svg width="15" height="15" viewBox="0 0 15 15"><rect x="1.500" y=".5" width="9" height="11" fill="#fff" stroke="#777" /><circle cx="10" cy="10" r="4.500" fill="#fff" stroke="#2e7d75" /><path d="M10 7.500V10h2" fill="none" stroke="#2e7d75" /></svg>}>Journal (Nur dieser Computer)</TreeRow>
              <TreeRow pl={43} icon={<svg width="15" height="15" viewBox="0 0 15 15"><path d="M.5 4h7v10h-7z" fill="#fff" stroke="#c9a862" /><path d="M0 3h9" stroke="#c9a862" strokeWidth="2" /><circle cx="10" cy="10" r="4" fill="#fff" stroke="#c8402f" strokeWidth="1.500" /><path d="M7.500 7.500l5 5" stroke="#c8402f" strokeWidth="1.500" /></svg>}>Junk-E-Mail</TreeRow>
              <TreeRow pl={43} icon={<svg width="16" height="14" viewBox="0 0 16 14"><rect width="16" height="14" fill="#fff" stroke="#777" /><path d="M0 2h16" stroke="#555" strokeWidth="3" /><path d="M4 3v11M8 3v11M12 3v11M0 6.500h16M0 10h16" stroke="#999" /><rect x="8" y="6.500" width="4" height="3.500" fill="#d8a84f" /></svg>}>Kalender (Nur dieser Computer)</TreeRow>
              <TreeRow pl={43} icon={<svg width="16" height="12" viewBox="0 0 16 12"><rect x=".5" y=".5" width="15" height="11" fill="#fff" stroke="#777" /><rect x="2" y="2" width="6" height="8" fill="#3f5fae" /><circle cx="5" cy="4.500" r="1.300" fill="#fff" /><path d="M9.500 4h5M9.500 7h5" stroke="#888" /></svg>}>Kontakte (Nur dieser Computer)</TreeRow>
              <TreeRow pl={43} icon={<svg width="15" height="15" viewBox="0 0 15 15"><path d="M0 0h15v15H5L0 10z" fill="#e8cd7e" /><path d="M0 10h5v5" fill="#fff" stroke="#999" strokeWidth=".5" /></svg>}>Notizen (Nur dieser Computer)</TreeRow>
              <TreeRow pl={43} icon={<F />}>Postausgang [1]</TreeRow>
            </div>
            <div className="w-[18px] bg-[#f0f0f0] shrink-0 flex flex-col items-center">
              <div className="h-[20px] flex items-center"><svg width="7" height="4" viewBox="0 0 7 4"><path d="M0 4h7L3.500 0z" fill="#333" /></svg></div>
              <div className="w-[14px] h-[152px] border border-[#9e9e9e] rounded-[2px] bg-gradient-to-r from-[#f2f2f2] to-[#d8d8d8] flex flex-col items-center justify-center gap-[1px]"><div className="w-[6px] h-px bg-[#555]" /><div className="w-[6px] h-px bg-[#555]" /><div className="w-[6px] h-px bg-[#555]" /></div>
              <div className="flex-1 flex items-end pb-[7px]"><Caret c="#333" /></div>
            </div>
          </div>
          <div className="h-[17px] bg-[#f0f0f0] shrink-0 flex items-center pl-[7px]">
            <svg width="4" height="7" viewBox="0 0 4 7"><path d="M4 0v7L0 3.500z" fill="#333" /></svg>
            <div className="ml-[8px] w-[193px] h-[14px] border border-[#9e9e9e] rounded-[2px] bg-gradient-to-b from-[#f2f2f2] to-[#d4d4d4] flex items-center justify-center gap-[1px]"><div className="w-px h-[6px] bg-[#555]" /><div className="w-px h-[6px] bg-[#555]" /><div className="w-px h-[6px] bg-[#555]" /></div>
            <svg width="4" height="7" viewBox="0 0 4 7" className="ml-[10px]"><path d="M0 0v7l4-3.500z" fill="#333" /></svg>
          </div>
        </div>
        <div className="ml-[10px] mt-[1px] flex flex-col gap-[9px] text-[12px]">
          <Btn primary>OK</Btn>
          <Btn>Abbrechen</Btn>
          <Btn>Neu...</Btn>
        </div>
      </div>
    </div>
    <svg width="13" height="19" viewBox="0 0 13 19" className="absolute left-[109px] top-[205px]"><path d="M1 1v15l4-3 3 6 2.500-1-3-6h5z" fill="#fff" fillOpacity=".6" stroke="#777" /></svg>
  </div>
);

const Watermark = () => (
  <svg width="100" height="80" viewBox="0 0 100 80" className="absolute left-[30px] top-[980px] pointer-events-none">
    <ellipse cx="33" cy="37" rx="13" ry="33" transform="rotate(-22 33 37)" fill="#ffffff" fillOpacity=".25" stroke="#c8c8c8" />
    <ellipse cx="35" cy="37" rx="9" ry="31" transform="rotate(-22 35 37)" fill="none" stroke="#d4d4d4" />
    <ellipse cx="63" cy="44" rx="13" ry="31" transform="rotate(35 63 44)" fill="#ffffff" fillOpacity=".25" stroke="#c8c8c8" />
    <ellipse cx="61" cy="45" rx="9" ry="29" transform="rotate(35 61 45)" fill="none" stroke="#d4d4d4" />
  </svg>
);

export default function App() {
  return (
    <div className="w-[1920px] h-[1080px] relative overflow-hidden bg-white flex flex-col tracking-[-0.24px] font-['Open_Sans',sans-serif]">
      <TitleBar />
      <Ribbon />
      <div className="flex-1 min-h-0 flex">
        <Sidebar />
        <div className="w-px bg-[#d6d6d6] mt-[9px] shrink-0" />
        <List />
        <div className="w-px bg-[#d6d6d6] mt-[9px] shrink-0" />
        <Reading />
      </div>
      <Status />
      <Taskbar />
      <BackDialog />
      <FrontDialog />
      <Watermark />
    </div>
  );
}
